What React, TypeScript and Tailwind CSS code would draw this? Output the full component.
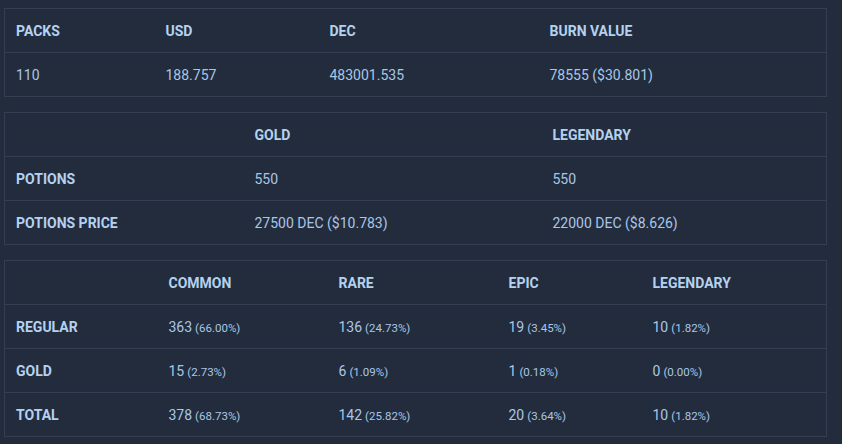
import React from 'react';

type Cell = { value: string; pct?: string };

const TH = 'h-[44px] pl-[11px] pr-3 pt-[2px] text-left align-middle font-bold text-[14px] text-[#b4d2f0]';
const TD = 'h-[44px] pl-[11px] pr-3 pt-[2px] text-left align-middle text-[14px] text-[#a9c7e6]';

function Pct({ c }: { c: Cell }) {
  return (
    <>
      {c.value}
      {c.pct && <span className="text-[11.5px] ml-[3px]">({c.pct})</span>}
    </>
  );
}

export default function App() {
  const rarity: { label: string; cells: Cell[] }[] = [
    {
      label: 'REGULAR',
      cells: [
        { value: '363', pct: '66.00%' },
        { value: '136', pct: '24.73%' },
        { value: '19', pct: '3.45%' },
        { value: '10', pct: '1.82%' },
      ],
    },
    {
      label: 'GOLD',
      cells: [
        { value: '15', pct: '2.73%' },
        { value: '6', pct: '1.09%' },
        { value: '1', pct: '0.18%' },
        { value: '0', pct: '0.00%' },
      ],
    },
    {
      label: 'TOTAL',
      cells: [
        { value: '378', pct: '68.73%' },
        { value: '142', pct: '25.82%' },
        { value: '20', pct: '3.64%' },
        { value: '10', pct: '1.82%' },
      ],
    },
  ];

  return (
    <div
      className="min-h-[444px] bg-[#232c3d] pt-2 pl-1 pr-4 flex flex-col gap-[15px]"
      style={{ fontFamily: 'Roboto, "Noto Sans", sans-serif' }}
    >
      {/* Pack summary */}
      <table className="w-[823px] table-fixed border-collapse border border-[#343f51]">
        <colgroup>
          <col className="w-[150px]" />
          <col className="w-[164px]" />
          <col className="w-[220px]" />
          <col />
        </colgroup>
        <thead>
          <tr className="border-b border-[#343f51]">
            <th className={TH}>PACKS</th>
            <th className={TH}>USD</th>
            <th className={TH}>DEC</th>
            <th className={TH}>BURN VALUE</th>
          </tr>
        </thead>
        <tbody>
          <tr>
            <td className={TD}>110</td>
            <td className={TD}>188.757</td>
            <td className={TD}>483001.535</td>
            <td className={TD}>78555 ($30.801)</td>
          </tr>
        </tbody>
      </table>

      {/* Potions */}
      <table className="w-[823px] table-fixed border-collapse border border-[#343f51]">
        <colgroup>
          <col className="w-[239px]" />
          <col className="w-[298px]" />
          <col />
        </colgroup>
        <thead>
          <tr className="border-b border-[#343f51]">
            <th className={TH}></th>
            <th className={TH}>GOLD</th>
            <th className={TH}>LEGENDARY</th>
          </tr>
        </thead>
        <tbody>
          <tr className="border-b border-[#343f51]">
            <td className={TH}>POTIONS</td>
            <td className={TD}>550</td>
            <td className={TD}>550</td>
          </tr>
          <tr>
            <td className={TH}>POTIONS PRICE</td>
            <td className={TD}>27500 DEC ($10.783)</td>
            <td className={TD}>22000 DEC ($8.626)</td>
          </tr>
        </tbody>
      </table>

      {/* Rarity breakdown */}
      <table className="w-[823px] table-fixed border-collapse border border-[#343f51]">
        <colgroup>
          <col className="w-[153px]" />
          <col className="w-[170px]" />
          <col className="w-[170px]" />
          <col className="w-[144px]" />
          <col />
        </colgroup>
        <thead>
          <tr className="border-b border-[#343f51]">
            <th className={TH}></th>
            <th className={TH}>COMMON</th>
            <th className={TH}>RARE</th>
            <th className={TH}>EPIC</th>
            <th className={TH}>LEGENDARY</th>
          </tr>
        </thead>
        <tbody>
          {rarity.map((row, i) => (
            <tr key={row.label} className={i < rarity.length - 1 ? 'border-b border-[#343f51]' : ''}>
              <td className={TH}>{row.label}</td>
              {row.cells.map((c, j) => (
                <td key={j} className={TD}>
                  <Pct c={c} />
                </td>
              ))}
            </tr>
          ))}
        </tbody>
      </table>
    </div>
  );
}
